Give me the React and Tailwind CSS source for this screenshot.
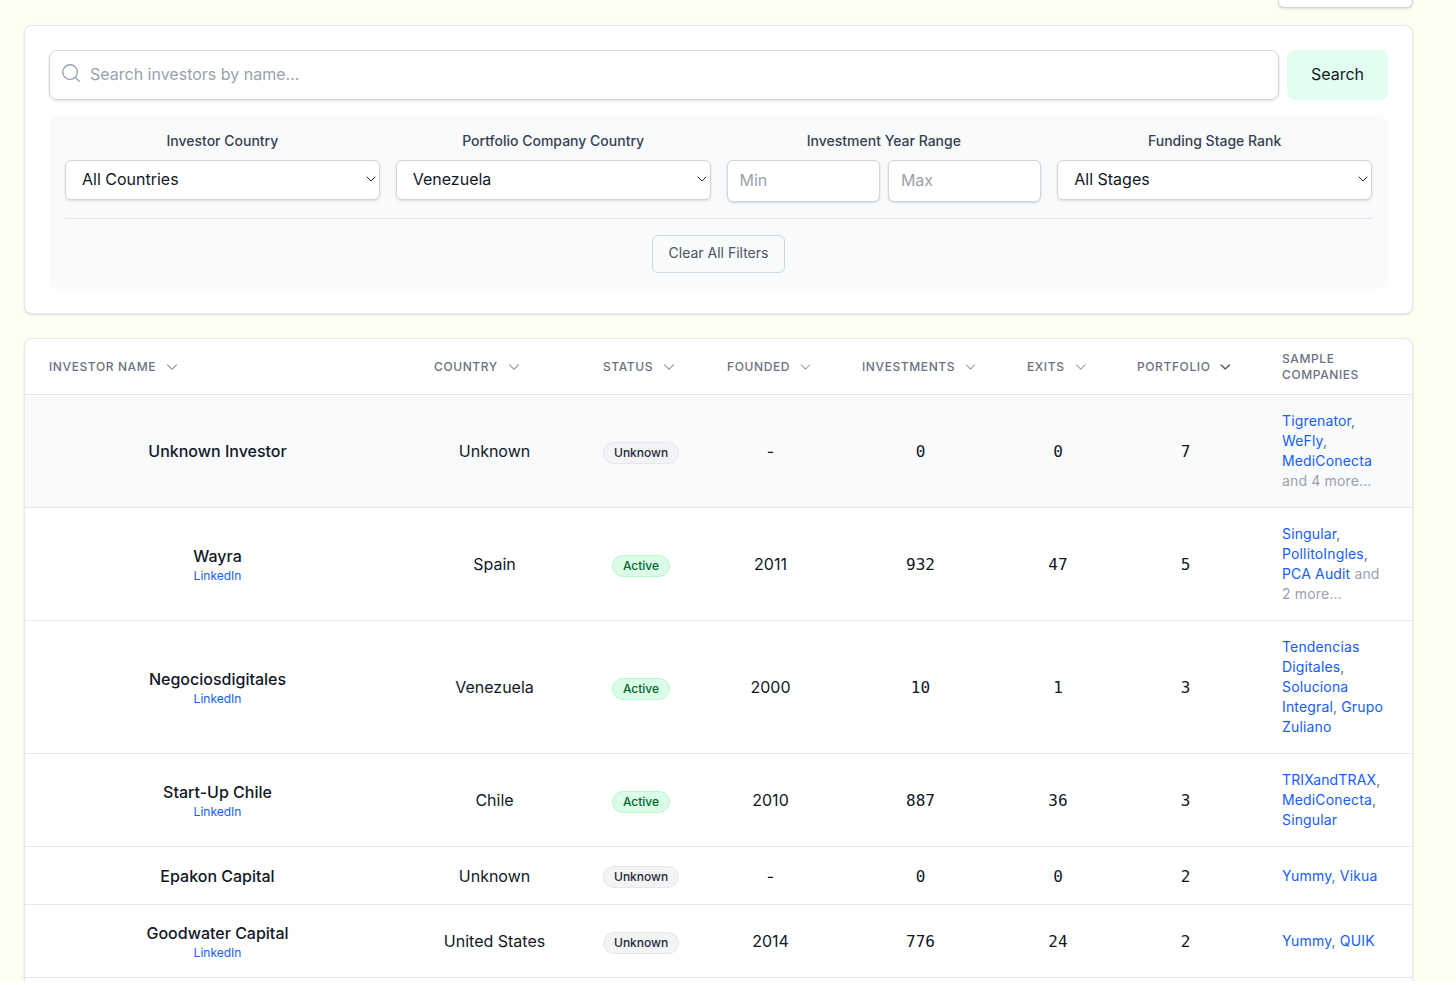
import React from "react";
import { Search, ChevronDown } from "lucide-react";

const COLS = [
  { label: "Investor Name", w: "w-[385px]" },
  { label: "Country", w: "w-[169px]" },
  { label: "Status", w: "w-[124px]" },
  { label: "Founded", w: "w-[135px]" },
  { label: "Investments", w: "w-[165px]" },
  { label: "Exits", w: "w-[110px]" },
  { label: "Portfolio", w: "w-[145px]", active: true },
];

const ROWS = [
  { name: "Unknown Investor", country: "Unknown", status: "Unknown", founded: "-", inv: 0, exits: 0, portfolio: 7, companies: ["Tigrenator", "WeFly", "MediConecta"], more: 4, highlight: true },
  { name: "Wayra", linkedin: true, country: "Spain", status: "Active", founded: "2011", inv: 932, exits: 47, portfolio: 5, companies: ["Singular", "PollitoIngles", "PCA Audit"], more: 2 },
  { name: "Negociosdigitales", linkedin: true, country: "Venezuela", status: "Active", founded: "2000", inv: 10, exits: 1, portfolio: 3, companies: ["Tendencias Digitales", "Soluciona Integral", "Grupo Zuliano"] },
  { name: "Start-Up Chile", linkedin: true, country: "Chile", status: "Active", founded: "2010", inv: 887, exits: 36, portfolio: 3, companies: ["TRIXandTRAX", "MediConecta", "Singular"] },
  { name: "Epakon Capital", country: "Unknown", status: "Unknown", founded: "-", inv: 0, exits: 0, portfolio: 2, companies: ["Yummy", "Vikua"] },
  { name: "Goodwater Capital", linkedin: true, country: "United States", status: "Unknown", founded: "2014", inv: 776, exits: 24, portfolio: 2, companies: ["Yummy", "QUIK"] },
];

function FilterSelect({ label, value, options }) {
  return (
    <div>
      <label className="block -mt-px mb-[9px] text-center text-sm font-medium text-gray-700">{label}</label>
      <div className="relative">
        <select defaultValue={value} className="block w-full h-10 pl-4 pr-6 pb-[2px] appearance-none bg-white text-base text-gray-900 border border-gray-300 rounded-md shadow-sm">
          {options.map((o) => <option key={o}>{o}</option>)}
        </select>
        <ChevronDown size={16} strokeWidth={1.5} className="absolute right-[1px] top-[11px] text-gray-800 pointer-events-none" />
      </div>
    </div>
  );
}

function Badge({ status }) {
  const active = status === "Active";
  return (
    <span className={`inline-flex px-2.5 py-0.5 rounded-full border text-xs font-medium ${active ? "bg-green-100 border-green-200 text-green-800" : "bg-gray-100 border-gray-200 text-gray-800"}`}>
      {status}
    </span>
  );
}

function Companies({ list, more }) {
  return (
    <>
      {list.map((c, i) => (
        <span key={c}>
          <a href="#" className="text-blue-600">{c}</a>
          {i < list.length - 1 ? <span className="text-gray-500">, </span> : null}
        </span>
      ))}
      {more ? <span className="text-gray-400"> and {more} more...</span> : null}
    </>
  );
}

export default function App() {
  return (
    <div className="h-[981px] overflow-hidden bg-[#fffef3] pl-6 pr-[43px] font-['Inter',sans-serif]">
      <div className="h-[25px] flex justify-end">
        <div className="w-[135px] h-2 bg-white border border-t-0 border-gray-300 rounded-b-md shadow-sm" />
      </div>

      <div className="bg-white border border-gray-200 rounded-lg shadow-sm p-6 mb-6">
        <div className="flex gap-2 mb-4">
          <div className="relative flex-1">
            <Search size={22} strokeWidth={1.5} className="absolute left-[11px] top-[12px] text-gray-400" />
            <input placeholder="Search investors by name..." className="w-full pl-10 pr-4 pt-[11px] pb-[13px] text-base border border-gray-300 rounded-lg shadow-sm placeholder:text-gray-400" />
          </div>
          <button className="px-6 pb-[2px] rounded-lg bg-[#e3fdf0] text-base text-gray-900">Search</button>
        </div>

        <div className="bg-gray-50 rounded-lg p-4">
          <div className="grid grid-cols-4 gap-4 items-start">
            <FilterSelect label="Investor Country" value="All Countries" options={["All Countries", "Venezuela", "Spain", "Chile"]} />
            <FilterSelect label="Portfolio Company Country" value="Venezuela" options={["All Countries", "Venezuela", "Spain", "Chile"]} />
            <div>
              <label className="block -mt-px mb-[9px] text-center text-sm font-medium text-gray-700">Investment Year Range</label>
              <div className="flex gap-2">
                <input placeholder="Min" className="w-full min-w-0 px-3 pt-[7px] pb-[9px] bg-white text-base border border-gray-300 rounded-md shadow-sm placeholder:text-gray-400" />
                <input placeholder="Max" className="w-full min-w-0 px-3 pt-[7px] pb-[9px] bg-white text-base border border-gray-300 rounded-md shadow-sm placeholder:text-gray-400" />
              </div>
            </div>
            <FilterSelect label="Funding Stage Rank" value="All Stages" options={["All Stages", "Seed", "Series A"]} />
          </div>
          <div className="mt-4 pt-4 border-t border-gray-200 flex justify-center">
            <button className="px-4 pt-[7px] pb-[9px] text-sm text-gray-600 border border-gray-300 rounded-md">Clear All Filters</button>
          </div>
        </div>
      </div>

      <div className="bg-white border border-gray-200 rounded-lg shadow-sm overflow-hidden">
        <table className="w-full table-fixed">
          <thead>
            <tr className="border-b border-gray-200">
              {COLS.map((c) => (
                <th key={c.label} className={`${c.w} px-6 pt-3 pb-[11px] text-left text-xs font-medium uppercase tracking-wider text-gray-500`}>
                  <span className="flex items-center whitespace-nowrap">
                    {c.label}
                    <ChevronDown size={18} strokeWidth={c.active ? 2 : 1.5} className={`ml-[7px] ${c.active ? "text-gray-600" : "text-gray-400"}`} />
                  </span>
                </th>
              ))}
              <th className="w-[154px] px-6 pt-3 pb-[11px] text-left text-xs font-medium uppercase tracking-wider text-gray-500">Sample Companies</th>
            </tr>
          </thead>
          <tbody className="text-gray-900">
            {ROWS.map((r) => (
              <tr key={r.name} className={`border-b border-gray-200 ${r.highlight ? "bg-gray-50" : ""}`}>
                <td className="px-6 py-4 text-center">
                  <div className="font-medium">{r.name}</div>
                  {r.linkedin ? <a href="#" className="block text-xs text-blue-600">LinkedIn</a> : null}
                </td>
                <td className="px-6 py-4 text-center">{r.country}</td>
                <td className="px-6 py-4 text-center"><Badge status={r.status} /></td>
                <td className="px-6 py-4 text-center">{r.founded}</td>
                <td className="px-6 pt-[17px] pb-[15px] text-center font-['DejaVu_Sans_Mono',monospace]">{r.inv}</td>
                <td className="px-6 pt-[17px] pb-[15px] text-center font-['DejaVu_Sans_Mono',monospace]">{r.exits}</td>
                <td className="px-6 pt-[17px] pb-[15px] text-center font-['DejaVu_Sans_Mono',monospace]">{r.portfolio}</td>
                <td className="px-6 py-4 text-sm tracking-[0.15px]"><Companies list={r.companies} more={r.more} /></td>
              </tr>
            ))}
            <tr><td colSpan={8} className="h-16" /></tr>
          </tbody>
        </table>
      </div>
    </div>
  );
}
